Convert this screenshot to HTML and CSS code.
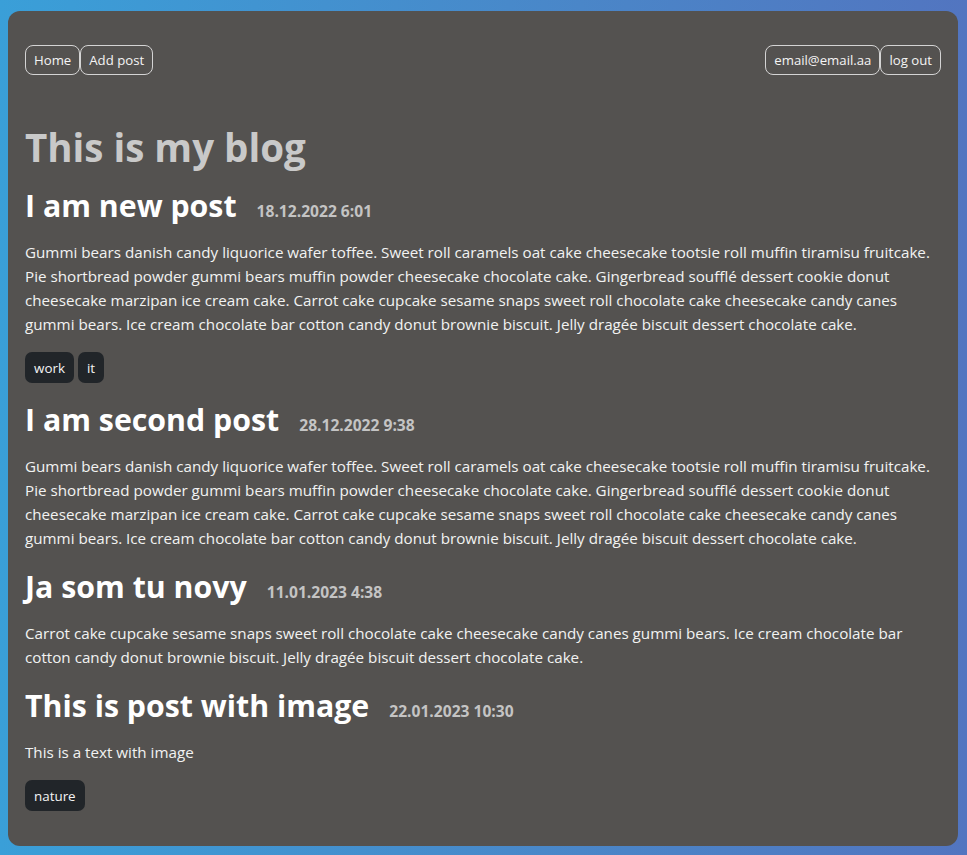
FILE: index.html
```html
<!DOCTYPE html>
<html lang="en">
<head>
<meta charset="utf-8">
<title>This is my blog</title>
<link rel="stylesheet" href="styles.css">
</head>
<body>
<main class="card">
  <nav class="nav">
    <div class="nav-group">
      <a class="nav-btn" href="#">Home</a>
      <a class="nav-btn" href="#">Add post</a>
    </div>
    <div class="nav-group">
      <a class="nav-btn" href="#">email@email.aa</a>
      <a class="nav-btn" href="#">log out</a>
    </div>
  </nav>

  <h1 class="blog-title">This is my blog</h1>

  <article class="post">
    <div class="post-head">
      <h2 class="post-title">I am new post</h2>
      <span class="post-date">18.12.2022 6:01</span>
    </div>
    <p class="post-text">Gummi bears danish candy liquorice wafer toffee. Sweet roll caramels oat cake cheesecake tootsie roll muffin tiramisu fruitcake. Pie shortbread powder gummi bears muffin powder cheesecake chocolate cake. Gingerbread soufflé dessert cookie donut cheesecake marzipan ice cream cake. Carrot cake cupcake sesame snaps sweet roll chocolate cake cheesecake candy canes gummi bears. Ice cream chocolate bar cotton candy donut brownie biscuit. Jelly dragée biscuit dessert chocolate cake.</p>
    <div class="tags">
      <span class="tag">work</span>
      <span class="tag">it</span>
    </div>
  </article>

  <article class="post">
    <div class="post-head">
      <h2 class="post-title">I am second post</h2>
      <span class="post-date">28.12.2022 9:38</span>
    </div>
    <p class="post-text">Gummi bears danish candy liquorice wafer toffee. Sweet roll caramels oat cake cheesecake tootsie roll muffin tiramisu fruitcake. Pie shortbread powder gummi bears muffin powder cheesecake chocolate cake. Gingerbread soufflé dessert cookie donut cheesecake marzipan ice cream cake. Carrot cake cupcake sesame snaps sweet roll chocolate cake cheesecake candy canes gummi bears. Ice cream chocolate bar cotton candy donut brownie biscuit. Jelly dragée biscuit dessert chocolate cake.</p>
  </article>

  <article class="post">
    <div class="post-head">
      <h2 class="post-title">Ja som tu novy</h2>
      <span class="post-date">11.01.2023 4:38</span>
    </div>
    <p class="post-text">Carrot cake cupcake sesame snaps sweet roll chocolate cake cheesecake candy canes gummi bears. Ice cream chocolate bar cotton candy donut brownie biscuit. Jelly dragée biscuit dessert chocolate cake.</p>
  </article>

  <article class="post">
    <div class="post-head">
      <h2 class="post-title">This is post with image</h2>
      <span class="post-date">22.01.2023 10:30</span>
    </div>
    <p class="post-text">This is a text with image</p>
    <div class="tags">
      <span class="tag">nature</span>
    </div>
  </article>
</main>
</body>
</html>
```
FILE: styles.css
```css
html, body {
  margin: 0;
  height: 100%;
}
body {
  box-sizing: border-box;
  padding: 11px 9px 9px 8px;
  background: linear-gradient(90deg, #3a9fd8 0%, #4a86c8 60%, #5275c0 100%);
  font-family: "Open Sans", "Noto Sans", sans-serif;
  font-size: 15.2px;
  line-height: 24px;
  color: #f2f2f2;
}
.card {
  box-sizing: border-box;
  height: 100%;
  background: #545250;
  border-radius: 12px;
  padding: 34px 17px 20px 17px;
}
.nav {
  display: flex;
  justify-content: space-between;
  align-items: center;
}
.nav-group {
  display: flex;
}
.nav-btn {
  display: flex;
  align-items: center;
  height: 30px;
  box-sizing: border-box;
  padding: 0 8px;
  border: 1px solid #d4d4d4;
  border-radius: 8px;
  color: #f4f4f4;
  text-decoration: none;
  font-size: 13.2px;
}
.blog-title {
  margin: 48px 0 16px;
  font-size: 38.5px;
  line-height: 48px;
  font-weight: 700;
  color: #c9c9c9;
}
.post {
  padding-bottom: 2px;
}
.post-head {
  display: flex;
  align-items: baseline;
  gap: 20px;
  margin-bottom: 15px;
}
.post-title {
  margin: 0;
  font-size: 30.3px;
  line-height: 38px;
  font-weight: 700;
  color: #ffffff;
}
.post-date {
  font-size: 15.6px;
  font-weight: 700;
  color: #c4c4c4;
}
.post-text {
  margin: 0 0 16px;
}
.tags {
  display: flex;
  gap: 4px;
  margin-bottom: 16px;
}
.tag {
  display: flex;
  align-items: center;
  height: 31px;
  box-sizing: border-box;
  padding: 0 9px;
  background: #212529;
  border-radius: 7px;
  font-size: 13.4px;
  color: #f4f4f4;
}
```
